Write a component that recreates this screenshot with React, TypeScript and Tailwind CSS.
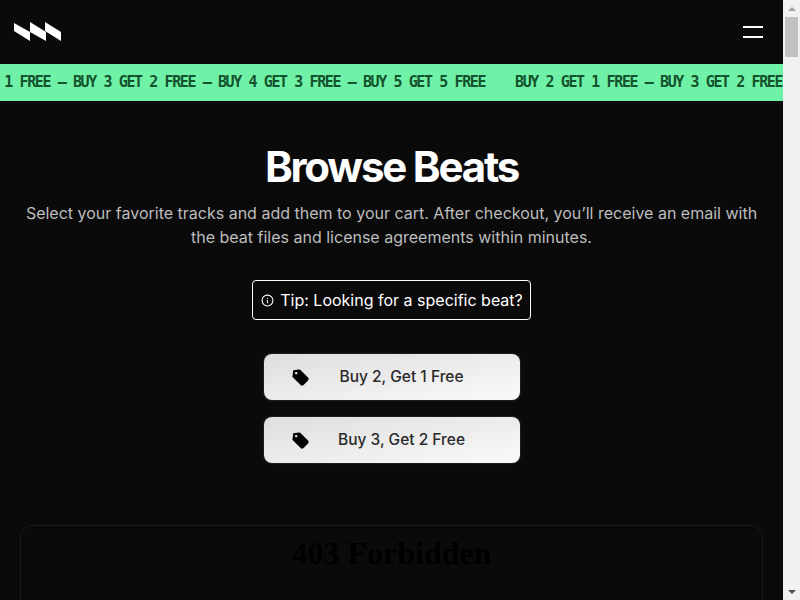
import React from 'react';
import { Info } from 'lucide-react';

const MARQUEE = [
  'BUY 2 GET 1 FREE',
  'BUY 3 GET 2 FREE',
  'BUY 4 GET 3 FREE',
  'BUY 5 GET 5 FREE',
].join(' — ');

const Logo = () => (
  <svg width="48" height="20" viewBox="0 0 48 20" fill="#fff">
    <polygon points="0,1 16,10 16,19 0,9" />
    <polygon points="16,0 32,10 32,19 16,10" />
    <polygon points="31,0 47,10 47,19 31,9" />
  </svg>
);

const TagIcon = () => (
  <svg className="absolute left-[25px] top-[12px]" width="21" height="21" viewBox="0 0 20 20">
    <g transform="rotate(45 10 10)">
      <path d="M1.5 10 L5 5.5 Q5.5 5 6 5 H16.5 Q18.5 5 18.5 7 V13 Q18.5 15 16.5 15 H6 Q5.5 15 5 14.5 Z" fill="#000" />
      <circle cx="5.5" cy="10" r="1.2" fill="#ddd" />
    </g>
  </svg>
);

const DealButton = ({ label }: { label: string }) => (
  <button className="relative flex h-[46px] w-[256px] items-center justify-center rounded-lg bg-gradient-to-br from-[#dedede] to-[#fafafa] pl-[20px] text-[15.5px] font-medium text-[#2a2a2a] shadow-[0_0_2px_rgba(255,255,255,0.3)]">
    <TagIcon />
    {label}
  </button>
);

// the window's own scrollbar is part of the picture, so it gets drawn by hand
const Scrollbar = () => (
  <div className="flex h-[600px] w-[17px] shrink-0 flex-col items-center bg-[#f1f1f1]">
    <div className="flex h-[17px] w-full items-center justify-center">
      <div className="h-0 w-0 border-x-[4px] border-b-[4px] border-x-transparent border-b-[#a3a3a3]" />
    </div>
    <div className="h-[40px] w-[13px] bg-[#c1c1c1]" />
    <div className="flex-1" />
    <div className="flex h-[17px] w-full items-center justify-center">
      <div className="h-0 w-0 border-x-[4px] border-t-[4px] border-x-transparent border-t-[#505050]" />
    </div>
  </div>
);

const App: React.FC = () => {
  return (
    <div className="flex h-[600px] w-[800px] overflow-hidden bg-[#0a0a0a] font-['Inter',sans-serif]">
      <div className="h-[600px] w-[783px] shrink-0 overflow-hidden">
        <header className="flex h-[64px] items-center justify-between pl-[14px] pr-[20px]">
          <Logo />
          <div className="flex w-[20px] flex-col gap-[8px]">
            <div className="h-[2px] bg-white" />
            <div className="h-[2px] bg-white" />
          </div>
        </header>

        <div className="flex h-[37px] items-center gap-[30px] overflow-hidden whitespace-nowrap bg-[#6ff2a8] font-['DejaVu_Sans_Mono',monospace] text-[15px] font-bold tracking-[-1.4px] text-[#14532d]">
          <span className="-ml-[72px] shrink-0">{MARQUEE}</span>
          <span className="shrink-0">{MARQUEE}</span>
        </div>

        <main className="flex flex-col items-center pt-[42px]">
          <h1 className="text-[42px] leading-[48px] font-bold tracking-[-0.052em] text-white">Browse Beats</h1>
          <p className="mt-[10px] w-[745px] text-center text-[16px] leading-[24px] text-[#bdbdbd]">
            Select your favorite tracks and add them to your cart. After checkout, you’ll receive an email with the beat files and license agreements within minutes.
          </p>

          <div className="mt-[31px] flex h-[40px] items-center gap-[6px] rounded border border-white pl-[8px] pr-[7px] text-[16px] text-white">
            <Info className="h-[13px] w-[13px]" />
            <span>Tip: Looking for a specific beat?</span>
          </div>

          <div className="mt-[34px] flex flex-col gap-[17px]">
            <DealButton label="Buy 2, Get 1 Free" />
            <DealButton label="Buy 3, Get 2 Free" />
          </div>

          <section className="mt-[62px] h-[500px] w-[743px] shrink-0 rounded-xl border border-[#1c1c1c]">
            <h1 className="mt-[9px] text-center font-['Liberation_Serif',serif] text-[32px] leading-[37px] font-bold text-black">403 Forbidden</h1>
          </section>
        </main>
      </div>
      <Scrollbar />
    </div>
  );
};

export default App;
